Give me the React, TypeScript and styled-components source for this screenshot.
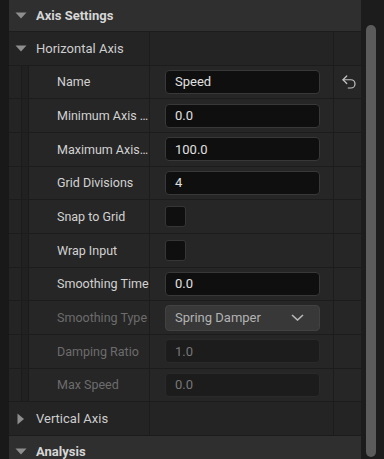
import styled, { createGlobalStyle } from "styled-components"
import { Undo2 } from "lucide-react"

const GlobalStyle = createGlobalStyle`
  html, body {
    margin: 0;
    background: #1a1a1a;
  }
  body {
    font-family: Roboto, "Noto Sans", sans-serif;
    -webkit-font-smoothing: antialiased;
  }
`

const ROW_H = "33.67px"

const Panel = styled.div`
  display: flex;
  width: 384px;
  height: 459px;
  overflow: hidden;
  background: #1a1a1a;
`

const Gutter = styled.div`
  width: 9px;
  flex: none;
  background: #191919;
`

const Content = styled.div`
  flex: 1;
  display: flex;
  flex-direction: column;
  min-width: 0;
`

const ScrollTrack = styled.div`
  width: 23px;
  flex: none;
  display: flex;
  box-sizing: border-box;
  padding: 25px 8px 2px 5px;
  background: #1c1c1c;
`

const Thumb = styled.div`
  flex: 1;
  background: #5b5b5b;
  border-radius: 5px;
`

const CategoryHeader = styled.div`
  flex: none;
  height: 32px;
  box-sizing: border-box;
  display: flex;
  align-items: center;
  gap: 9px;
  padding-left: 6px;
  background: #2f2f2f;
  border-bottom: 1px solid #1d1d1d;
  color: #d6d6d6;
  font-size: 13px;
  font-weight: 700;
`

const Row = styled.div<{ $group?: boolean }>`
  flex: none;
  height: ${ROW_H};
  box-sizing: border-box;
  display: grid;
  grid-template-columns: 140px 183px 27px;
  column-gap: 1px;
  background: #1c1c1c;
  border-bottom: 1px solid #1c1c1c;
  & > * {
    background: ${(p) => (p.$group ? "#242424" : "#262626")};
  }
`

const GroupName = styled.div`
  display: flex;
  align-items: center;
  gap: 9px;
  padding-left: 6px;
  color: #cdcdcd;
  font-size: 13px;
`

const NameCell = styled.div`
  display: flex;
  align-items: stretch;
  min-width: 0;
`

const IndentGuide = styled.div<{ $w: number; $bg: string }>`
  flex: none;
  width: ${(p) => p.$w}px;
  background: ${(p) => p.$bg};
  border-right: 1px solid #1b1b1b;
`

const Label = styled.div<{ $disabled?: boolean }>`
  flex: 1;
  min-width: 0;
  align-self: center;
  padding-left: 28px;
  white-space: nowrap;
  overflow: hidden;
  text-overflow: ellipsis;
  font-size: 12.5px;
  color: ${(p) => (p.$disabled ? "#6c6c6c" : "#d2d2d2")};
`

const ValueCell = styled.div`
  display: flex;
  align-items: center;
  padding-left: 15px;
`

const ResetCell = styled.div`
  display: flex;
  align-items: center;
  justify-content: center;
  padding-left: 3px;
  color: #c4c4c4;
`

const TextField = styled.div<{ $disabled?: boolean }>`
  width: 155px;
  height: 24px;
  box-sizing: border-box;
  display: flex;
  align-items: center;
  padding-left: 9px;
  border-radius: 4px;
  font-size: 13px;
  background: ${(p) => (p.$disabled ? "#1c1c1c" : "#0f0f0f")};
  border: 1px solid ${(p) => (p.$disabled ? "#2a2a2a" : "#383838")};
  color: ${(p) => (p.$disabled ? "#777777" : "#e0e0e0")};
`

const CheckBox = styled.div`
  width: 21px;
  height: 21px;
  box-sizing: border-box;
  border-radius: 3px;
  background: #0f0f0f;
  border: 1px solid #363636;
`

const ComboBox = styled.div`
  width: 155px;
  height: 26px;
  box-sizing: border-box;
  display: flex;
  align-items: center;
  justify-content: space-between;
  padding: 0 15px 0 9px;
  border-radius: 4px;
  background: #383838;
  border: 1px solid #424242;
  color: #b2b2b2;
  font-size: 13px;
`

const Arrow = ({ open }: { open: boolean }) =>
  open ? (
    <svg width="12" height="7" viewBox="0 0 12 7">
      <path d="M0.5 0.5 H11.5 L6 6.5 Z" fill="#8e8e8e" />
    </svg>
  ) : (
    <svg width="12" height="12" viewBox="0 0 12 12">
      <path d="M2.5 0.5 V11.5 L9 6 Z" fill="#8e8e8e" />
    </svg>
  )

const Chevron = () => (
  <svg width="13" height="7" viewBox="0 0 13 7">
    <path d="M1 1 L6.5 6 L12 1" fill="none" stroke="#b8b8b8" strokeWidth="1.6" />
  </svg>
)

type Prop =
  | { label: string; kind: "text"; value: string; disabled?: boolean; reset?: boolean }
  | { label: string; kind: "check" }
  | { label: string; kind: "combo"; value: string; disabled?: boolean }

const props: Prop[] = [
  { label: "Name", kind: "text", value: "Speed", reset: true },
  { label: "Minimum Axis Value", kind: "text", value: "0.0" },
  { label: "Maximum Axis Value", kind: "text", value: "100.0" },
  { label: "Grid Divisions", kind: "text", value: "4" },
  { label: "Snap to Grid", kind: "check" },
  { label: "Wrap Input", kind: "check" },
  { label: "Smoothing Time", kind: "text", value: "0.0" },
  { label: "Smoothing Type", kind: "combo", value: "Spring Damper", disabled: true },
  { label: "Damping Ratio", kind: "text", value: "1.0", disabled: true },
  { label: "Max Speed", kind: "text", value: "0.0", disabled: true },
]

function PropertyRow({ prop }: { prop: Prop }) {
  const disabled = "disabled" in prop && prop.disabled
  return (
    <Row>
      <NameCell>
        <IndentGuide $w={12} $bg="#242424" />
        <IndentGuide $w={6} $bg="#212121" />
        <Label $disabled={disabled}>{prop.label}</Label>
      </NameCell>
      <ValueCell>
        {prop.kind === "text" && <TextField $disabled={prop.disabled}>{prop.value}</TextField>}
        {prop.kind === "check" && <CheckBox />}
        {prop.kind === "combo" && (
          <ComboBox>
            {prop.value}
            <Chevron />
          </ComboBox>
        )}
      </ValueCell>
      <ResetCell>
        {prop.kind === "text" && prop.reset && <Undo2 size={18} strokeWidth={1.6} />}
      </ResetCell>
    </Row>
  )
}

export default function App() {
  return (
    <>
      <GlobalStyle />
      <Panel>
        <Gutter />
        <Content>
          <CategoryHeader>
            <Arrow open />
            Axis Settings
          </CategoryHeader>
          <Row $group>
            <GroupName>
              <Arrow open />
              Horizontal Axis
            </GroupName>
            <div />
            <div />
          </Row>
          {props.map((p) => (
            <PropertyRow key={p.label} prop={p} />
          ))}
          <Row $group>
            <GroupName>
              <Arrow open={false} />
              Vertical Axis
            </GroupName>
            <div />
            <div />
          </Row>
          <CategoryHeader>
            <Arrow open />
            Analysis
          </CategoryHeader>
        </Content>
        <ScrollTrack>
          <Thumb />
        </ScrollTrack>
      </Panel>
    </>
  )
}
